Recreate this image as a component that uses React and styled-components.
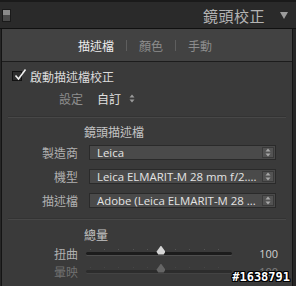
import styled, { createGlobalStyle } from 'styled-components'

const GlobalStyle = createGlobalStyle`
    body {
        margin: 0;
        background: #262626;
    }
`

const CJK = `"Noto Sans CJK TC", "Noto Sans", sans-serif`
const LATIN = `"Open Sans", "Noto Sans CJK TC", sans-serif`

const tabs = [
    { name: '描述檔', active: true },
    { name: '顏色' },
    { name: '手動' }
]

const dropdowns = [
    { label: '製造商', value: 'Leica' },
    { label: '機型', value: 'Leica ELMARIT-M 28 mm f/2....' },
    { label: '描述檔', value: 'Adobe (Leica ELMARIT-M 28 ...' }
]

const sliders = [
    { label: '扭曲', value: 100, pos: 0.51 },
    { label: '暈映', value: 100, pos: 0.51, dim: true }
]

function UpDown({ color = '#a8a8a8' }) {
    return (
        <svg width="6" height="9" viewBox="0 0 6 9">
            <path d="M3 0.5 L5.5 3.5 H0.5 Z" fill={color} />
            <path d="M3 8.5 L5.5 5.5 H0.5 Z" fill={color} />
        </svg>
    )
}

export default function App() {
    return (
        <Frame>
            <GlobalStyle />
            <Header>
                <PanelSwitch />
                <Title>鏡頭校正</Title>
                <Caret />
            </Header>
            <Panel>
                <Tabs>
                    {tabs.map((t, i) => (
                        <TabGroup key={t.name}>
                            {i > 0 && <TabSep />}
                            <Tab active={t.active}>{t.name}</Tab>
                        </TabGroup>
                    ))}
                </Tabs>
                <Content>
                    <CheckRow>
                        <CheckBox>
                            <svg width="14" height="14" viewBox="0 0 14 14">
                                <path d="M2.5 7.5 L5.5 11 L12.5 1.5" stroke="#f0f0f0" strokeWidth="1.6" fill="none" />
                            </svg>
                        </CheckBox>
                        <CheckLabel>啟動描述檔校正</CheckLabel>
                    </CheckRow>
                    <SetupRow>
                        <SetupLabel>設定</SetupLabel>
                        <SetupValue>自訂</SetupValue>
                        <UpDown color="#9a9a9a" />
                    </SetupRow>
                    <Divider />
                    <SectionTitle>鏡頭描述檔</SectionTitle>
                    <DropGrid>
                        {dropdowns.map(d => (
                            <DropRow key={d.label}>
                                <FieldLabel>{d.label}</FieldLabel>
                                <Select>
                                    <SelectText>{d.value}</SelectText>
                                    <SelectArrow><UpDown /></SelectArrow>
                                </Select>
                            </DropRow>
                        ))}
                    </DropGrid>
                    <Divider />
                    <SectionTitle small>總量</SectionTitle>
                    {sliders.map(s => (
                        <SliderRow key={s.label} dim={s.dim}>
                            <FieldLabel>{s.label}</FieldLabel>
                            <Track>
                                <Ticks />
                                <Thumb dim={s.dim} style={{ left: `${s.pos * 100}%` }} />
                            </Track>
                            <SliderValue>{s.value}</SliderValue>
                        </SliderRow>
                    ))}
                </Content>
            </Panel>
            <Watermark>#1638791</Watermark>
        </Frame>
    )
}

const Frame = styled.div`
    position: relative;
    width: 296px;
    height: 286px;
    overflow: hidden;
    background: #262626;
    border-top: 2px solid #1a1a1a;
    box-sizing: border-box;
`

const Header = styled.div`
    display: flex;
    align-items: center;
    height: 26px;
    padding: 0 8px 0 2px;
    background: #2a2a2a;
    border-bottom: 1px solid #101010;
`

const PanelSwitch = styled.div`
    width: 9px;
    height: 13px;
    box-sizing: border-box;
    border: 1px solid #1a1a1a;
    background: linear-gradient(#8a8a8a 0 50%, #4a4a4a 50% 100%);
`

const Title = styled.div`
    margin-left: auto;
    font-family: ${CJK};
    font-size: 15px;
    color: #b4b4b4;
    letter-spacing: 0.5px;
`

const Caret = styled.div`
    margin-left: 15px;
    width: 0;
    height: 0;
    border-left: 4px solid transparent;
    border-right: 4px solid transparent;
    border-top: 7px solid #9c9c9c;
`

const Panel = styled.div`
    margin: 0 3px 0 1px;
    border-left: 1px solid #141414;
    border-right: 1px solid #141414;
    background: #3a3a3a;
    height: 260px;
`

const Tabs = styled.div`
    display: flex;
    justify-content: center;
    align-items: center;
    height: 32px;
    padding-right: 4px;
    background: #424242;
    border-bottom: 1px solid #1c1c1c;
`

const TabGroup = styled.div`
    display: flex;
    align-items: center;
`

const TabSep = styled.div`
    width: 1px;
    height: 11px;
    margin: 0 12px;
    background: #5e5e5e;
`

const Tab = styled.div`
    font-family: ${CJK};
    font-size: 12px;
    color: ${({ active }) => active ? '#ececec' : '#8c8c8c'};
`

const Content = styled.div`
    display: flex;
    flex-direction: column;
    padding-top: 7px;
`

const CheckRow = styled.div`
    display: flex;
    align-items: center;
    height: 14px;
    padding-left: 10px;
`

const CheckBox = styled.div`
    position: relative;
    width: 10px;
    height: 10px;
    box-sizing: border-box;
    border: 1px solid #111;
    background: #2e2e2e;

    svg {
        position: absolute;
        left: 0;
        top: -4px;
    }
`

const CheckLabel = styled.div`
    margin-left: 8px;
    font-family: ${CJK};
    font-size: 12px;
    color: #dcdcdc;
`

const SetupRow = styled.div`
    display: flex;
    align-items: center;
    height: 16px;
    margin-top: 7px;
    padding-left: 57px;
`

const SetupLabel = styled.div`
    font-family: ${CJK};
    font-size: 12px;
    color: #8e8e8e;
`

const SetupValue = styled.div`
    margin-left: 14px;
    margin-right: 8px;
    font-family: ${CJK};
    font-size: 12px;
    color: #e0e0e0;
`

const Divider = styled.div`
    height: 1px;
    margin: 10px 6px 0 6px;
    background: #474747;
    border-top: 1px solid #333;
`

const SectionTitle = styled.div`
    margin-top: ${({ small }) => small ? '7px' : '6px'};
    padding-left: 82px;
    font-family: ${CJK};
    font-size: 12px;
    line-height: 16px;
    color: #c4c4c4;
`

const DropGrid = styled.div`
    display: flex;
    flex-direction: column;
    gap: 9px;
    margin-top: 5px;
`

const DropRow = styled.div`
    display: grid;
    grid-template-columns: 76px 187px;
    column-gap: 11px;
    align-items: center;
    height: 15px;
`

const FieldLabel = styled.div`
    text-align: right;
    font-family: ${CJK};
    font-size: 12px;
    line-height: 15px;
    color: #b0b0b0;
`

const Select = styled.div`
    display: flex;
    height: 15px;
    box-sizing: border-box;
    border: 1px solid #2a2a2a;
    background: #4a4a4a;
`

const SelectText = styled.div`
    flex: 1;
    padding-left: 7px;
    font-family: ${LATIN};
    font-size: 11.4px;
    line-height: 13px;
    color: #e4e4e4;
    white-space: nowrap;
    overflow: hidden;
`

const SelectArrow = styled.div`
    display: flex;
    align-items: center;
    justify-content: center;
    width: 10px;
    margin: 1px;
    border: 1px solid #3a3a3a;
    background: #535353;
`

const SliderRow = styled.div`
    display: grid;
    grid-template-columns: 76px 146px 1fr;
    column-gap: 8px;
    align-items: center;
    height: 18px;
    margin-top: ${({ dim }) => dim ? '0' : '1px'};
    opacity: ${({ dim }) => dim ? 0.45 : 1};
`

const Track = styled.div`
    position: relative;
    height: 3px;
    border-radius: 2px;
    background: #1c1c1c;
    box-shadow: 0 1px 0 #4e4e4e;
`

const Ticks = styled.div`
    position: absolute;
    left: 4px;
    right: 4px;
    top: -3px;
    height: 1px;
    background: repeating-linear-gradient(90deg, #555 0 1px, transparent 1px 14.2px);
`

const Thumb = styled.div`
    position: absolute;
    top: -6px;
    width: 9px;
    height: 9px;
    margin-left: -4px;
    background: ${({ dim }) => dim ? '#9a9a9a' : '#d6d6d6'};
    clip-path: polygon(50% 0, 100% 70%, 80% 100%, 20% 100%, 0 70%);
`

const SliderValue = styled.div`
    padding-right: 14px;
    text-align: right;
    font-family: ${LATIN};
    font-size: 11px;
    color: #d0d0d0;
`

const Watermark = styled.div`
    position: absolute;
    right: 6px;
    bottom: 2px;
    font-family: "DejaVu Sans Mono", monospace;
    font-weight: bold;
    font-size: 12px;
    color: #fff;
    text-shadow: 1px 0 0 #000, -1px 0 0 #000, 0 1px 0 #000, 0 -1px 0 #000, 1px 1px 0 #000, -1px -1px 0 #000, 1px -1px 0 #000, -1px 1px 0 #000;
`
